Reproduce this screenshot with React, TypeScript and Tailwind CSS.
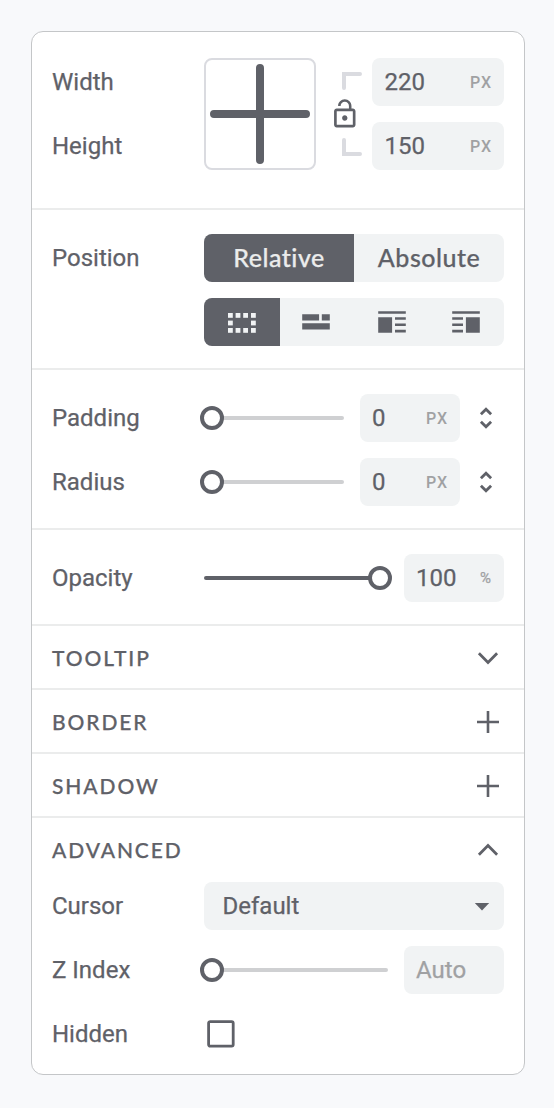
import React from "react";
import type { ReactNode } from "react";

function Row({ label, children }: { label: string; children: ReactNode }) {
  return (
    <div className="flex h-12 items-center">
      <div className="w-[152px] shrink-0 text-[24px] leading-[48px]">{label}</div>
      {children}
    </div>
  );
}

function Field({ value, unit, wide }: { value: string; unit?: string; wide?: boolean }) {
  return (
    <div
      className={`flex h-12 shrink-0 items-center justify-between rounded-lg bg-[#f1f3f4] ${
        wide ? "w-[132px] pl-[12.5px]" : "w-[100px] pl-3"
      }`}
    >
      <span className="text-[24px] leading-[48px]">{value}</span>
      {unit === "%" && <span className="pr-[13px] pt-px text-[15px] text-[#a0a1a3]">%</span>}
      {unit === "PX" && (
        <span className="pr-3 pt-px text-[16px] font-medium tracking-[1px] text-[#a0a1a3] [-webkit-text-stroke:0px]">
          PX
        </span>
      )}
    </div>
  );
}

function Slider({ width, full }: { width: string; full?: boolean }) {
  return (
    <div className={`relative h-1 shrink-0 rounded-sm ${width} ${full ? "bg-[#5f6168]" : "bg-[#cfd0d2]"}`}>
      <div
        className={`absolute -top-2.5 h-6 w-6 rounded-full border-4 border-[#5f6168] bg-white ${
          full ? "-right-3" : "-left-1"
        }`}
      />
    </div>
  );
}

function Stepper() {
  return (
    <svg className="ml-[18px]" width="16" height="24" viewBox="0 0 16 24" fill="none" stroke="#5f6168" strokeWidth="2.8">
      <path d="M2.9 8.3 8 3.2l5.1 5.1M2.9 15.7 8 20.8l5.1-5.1" />
    </svg>
  );
}

type Mark = "down" | "up" | "plus";

function Heading({ title, mark }: { title: string; mark: Mark }) {
  return (
    <div className="flex h-[62px] items-center justify-between px-5">
      <span className="pt-0.5 font-['Lato'] text-[21px] font-medium tracking-[1.9px]">{title}</span>
      <svg className="mt-px" width="32" height="32" viewBox="0 0 32 32" fill="none" stroke="#5f6168" strokeWidth="2.8">
        {mark === "down" && <path d="m6.9 11.3 9.1 9.1 9.1-9.1" />}
        {mark === "up" && <path d="m6.9 20.7 9.1-9.1 9.1 9.1" />}
        {mark === "plus" && <path strokeWidth="2.6" d="M5 16h22M16 5v22" />}
      </svg>
    </div>
  );
}

function WrapIcon({ flip }: { flip?: boolean }) {
  return (
    <svg className={flip ? "-scale-x-100" : ""} width="28" height="22" viewBox="0 0 28 22" fill="#5f6168">
      <path d="M.2.2h27.6v2.6H.2zM.2 6.2h13.9v15.6H.2zM17 6.2h10.8v2.6H17zM17 12.4h10.8V15H17zM17 18.8h10.8v2.8H17z" />
    </svg>
  );
}

const dots = [
  [0, 0], [7.6, 0], [15.2, 0], [23, 0],
  [0, 7.6], [23, 7.6],
  [0, 15], [7.6, 15], [15.2, 15], [23, 15],
];

const divider = "border-b-2 border-[#ebecec]";

export default function App() {
  return (
    <div className="h-[1108px] w-[554px] bg-[#f8f9fb] pl-[31px] pt-[31px] font-['Roboto',sans-serif] text-[#5f6168] [-webkit-text-stroke:0.25px]">
      <div className="h-[1044px] w-[494px] overflow-hidden rounded-xl border border-[#c4c6c8] bg-white">
        <section className={`flex h-[178px] px-5 pt-[26px] ${divider}`}>
          <div className="flex w-[152px] flex-col gap-4 text-[24px] leading-[48px]">
            <div>Width</div>
            <div>Height</div>
          </div>
          <div className="h-28 w-28 shrink-0 rounded-lg border-2 border-[#dadbe0]">
            <svg width="108" height="108" viewBox="0 0 108 108" stroke="#5f6168" strokeWidth="8" strokeLinecap="round">
              <path d="M54 8v92M8 54h92" />
            </svg>
          </div>
          <svg className="ml-3 shrink-0" width="44" height="112" viewBox="0 0 44 112" fill="none">
            <path d="M16 30V16h16M16 82v14h16" stroke="#dadbe0" strokeWidth="4" strokeLinecap="round" />
            <path
              transform="translate(.7 39.9) scale(1.34)"
              fill="#5f6168"
              d="M12 17c1.1 0 2-.9 2-2s-.9-2-2-2-2 .9-2 2 .9 2 2 2zm6-9h-1V6c0-2.76-2.24-5-5-5S7 3.24 7 6h1.9c0-1.71 1.39-3.1 3.1-3.1s3.1 1.39 3.1 3.1v2H6c-1.1 0-2 .9-2 2v10c0 1.1.9 2 2 2h12c1.1 0 2-.9 2-2V10c0-1.1-.9-2-2-2zm0 12H6V10h12v10z"
            />
          </svg>
          <div className="flex flex-col gap-4">
            <Field value="220" unit="PX" wide />
            <Field value="150" unit="PX" wide />
          </div>
        </section>

        <section className={`h-[160px] px-5 pt-6 ${divider}`}>
          <Row label="Position">
            <div className="flex h-12 w-[300px] overflow-hidden rounded-lg bg-[#f1f3f4] text-center font-['Lato'] text-[25px] font-medium leading-[46px] tracking-[0.5px] [font-variant-ligatures:none]">
              <div className="w-1/2 bg-[#5f6168] text-[#ebecec]">Relative</div>
              <div className="w-1/2">Absolute</div>
            </div>
          </Row>
          <div className="ml-[152px] mt-4 flex h-12 w-[300px] overflow-hidden rounded-lg bg-[#f1f3f4]">
            <div className="flex w-[76px] items-center justify-center bg-[#5f6168]">
              <svg className="mt-0.5" width="28" height="20" viewBox="0 0 28 20" fill="#f1f3f4">
                {dots.map(([x, y]) => (
                  <rect key={`${x}-${y}`} x={x} y={y} width="4.8" height="4.8" />
                ))}
              </svg>
            </div>
            <div className="flex w-[72px] items-center justify-center">
              <svg width="28" height="16" viewBox="0 0 28 16" fill="#5f6168">
                <path d="M.2.3h16.9v6.2H.2zM19.8.3h8v6.2h-8zM.2 9.2h27.6v6.3H.2z" />
              </svg>
            </div>
            <div className="flex w-20 items-center justify-center">
              <WrapIcon />
            </div>
            <div className="flex w-[68px] items-center justify-center">
              <WrapIcon flip />
            </div>
          </div>
        </section>

        <section className={`flex h-[160px] flex-col gap-4 px-5 pt-6 ${divider}`}>
          {["Padding", "Radius"].map((label) => (
            <Row key={label} label={label}>
              <Slider width="mr-4 w-[140px]" />
              <Field value="0" unit="PX" />
              <Stepper />
            </Row>
          ))}
        </section>

        <section className={`h-24 px-5 pt-6 ${divider}`}>
          <Row label="Opacity">
            <Slider width="mr-6 w-[176px]" full />
            <Field value="100" unit="%" />
          </Row>
        </section>

        <section className={divider}><Heading title="TOOLTIP" mark="down" /></section>
        <section className={divider}><Heading title="BORDER" mark="plus" /></section>
        <section className={divider}><Heading title="SHADOW" mark="plus" /></section>
        <section>
          <Heading title="ADVANCED" mark="up" />
          <div className="flex flex-col gap-4 px-5 pt-0.5">
            <Row label="Cursor">
              <div className="flex h-12 w-[300px] items-center justify-between rounded-lg bg-[#f1f3f4] pl-[18.5px] pr-3.5">
                <span className="text-[24px] leading-[48px]">Default</span>
                <svg className="mt-px" width="16" height="8" viewBox="0 0 16 8" fill="#5f6168">
                  <path d="M.8 0h14.4L8 7.5z" />
                </svg>
              </div>
            </Row>
            <Row label="Z Index">
              <Slider width="mr-4 w-[184px]" />
              <div className="text-[#a0a1a3]">
                <Field value="Auto" />
              </div>
            </Row>
            <Row label="Hidden">
              <svg className="ml-[3px]" width="28" height="28" viewBox="0 0 28 28" fill="none">
                <rect x="1.6" y="1.6" width="24.6" height="24.6" rx="1.6" stroke="#5f6168" strokeWidth="2.8" />
              </svg>
            </Row>
          </div>
        </section>
      </div>
    </div>
  );
}
